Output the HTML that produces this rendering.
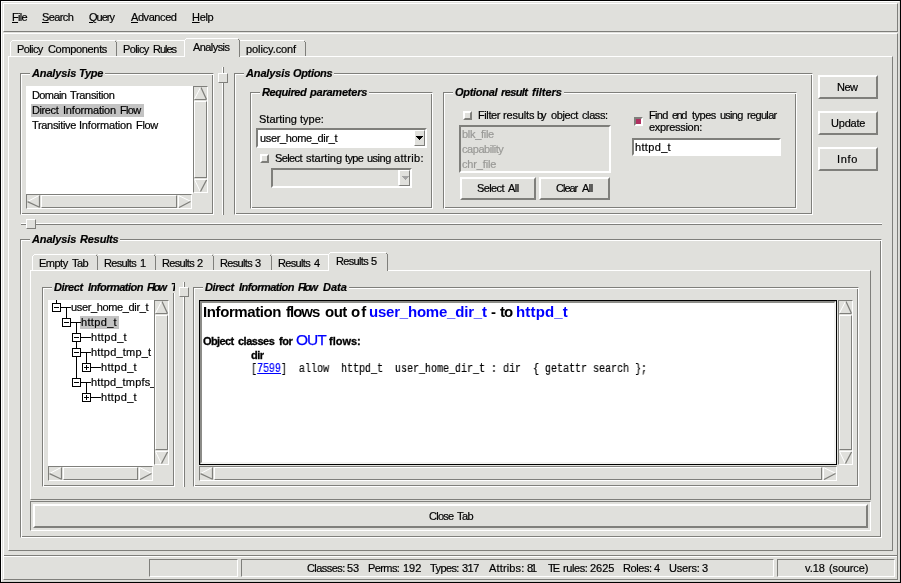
<!DOCTYPE html>
<html>
<head>
<meta charset="utf-8">
<style>
html,body{margin:0;padding:0;}
body{width:901px;height:583px;background:#000;overflow:hidden;position:relative;font-family:"Liberation Sans",sans-serif;font-size:11px;color:#000;}
div,span{box-sizing:border-box;}
.a{position:absolute;}
.bg{background:#e0e0dc;}
.t{position:absolute;white-space:pre;line-height:14px;height:14px;will-change:transform;-webkit-text-stroke:0.2px;}
.raised{border:2px solid;border-color:#ffffff #7f7f7b #7f7f7b #ffffff;}
.raised1{border:1px solid;border-color:#ffffff #7f7f7b #7f7f7b #ffffff;}
.sunken{border:2px solid;border-color:#7f7f7b #ffffff #ffffff #7f7f7b;}
.sunken1{border:1px solid;border-color:#7f7f7b #ffffff #ffffff #7f7f7b;}
.groove{border:1px solid #7f7f7b;border-right-color:#ffffff;border-bottom-color:#ffffff;box-shadow:inset 1px 1px 0 #ffffff, inset -1px -1px 0 #7f7f7b;}
.bi{font-weight:bold;font-style:italic;}
.white{background:#fff;}
.gray{color:#999996;}
.mono{font-family:"Liberation Mono",monospace;}
u{text-decoration:underline;}
</style>
</head>
<body>
<div class="a raised1 bg" style="left:1px;top:1px;width:899px;height:581px;border-right-color:#d4d4d0;border-bottom-color:#d4d4d0;"></div>
<div class="a raised1" style="left:3px;top:3px;width:895px;height:29px;"></div>
<div class="t " style="left:12px;top:10px;letter-spacing:-0.667px;"><u>F</u>ile</div>
<div class="t " style="left:42px;top:10px;letter-spacing:-0.600px;"><u>S</u>earch</div>
<div class="t " style="left:89px;top:10px;letter-spacing:-1.000px;"><u>Q</u>uery</div>
<div class="t " style="left:131px;top:10px;letter-spacing:-0.429px;"><u>A</u>dvanced</div>
<div class="t " style="left:192px;top:10px;letter-spacing:-0.333px;"><u>H</u>elp</div>
<div class="a raised1" style="left:3px;top:33px;width:895px;height:547px;"></div>
<div class="a raised1" style="left:8px;top:56px;width:885px;height:495px;"></div>
<svg class="a" style="left:10px;top:40px;" width="107" height="16" shape-rendering="crispEdges"><polygon points="0,16 0,2 2,0 105,0 107,2 107,16" fill="#e0e0dc"/><path d="M0.5,16 V2.5 L2.5,0.5 H104.5" stroke="#ffffff" fill="none"/><path d="M105.5,1.5 L106.5,2.5 V16" stroke="#7f7f7b" fill="none"/></svg>
<div class="t " style="left:17px;top:42px;letter-spacing:-0.600px;">Policy</div>
<div class="t " style="left:48px;top:42px;letter-spacing:-0.333px;">Components</div>
<svg class="a" style="left:117px;top:40px;" width="71" height="16" shape-rendering="crispEdges"><polygon points="0,16 0,2 2,0 69,0 71,2 71,16" fill="#e0e0dc"/><path d="M0,0.5 H68.5" stroke="#ffffff" fill="none"/><path d="M69.5,1.5 L70.5,2.5 V16" stroke="#7f7f7b" fill="none"/></svg>
<div class="t " style="left:123px;top:42px;letter-spacing:-0.600px;">Policy</div>
<div class="t " style="left:153px;top:42px;letter-spacing:-1.000px;">Rules</div>
<svg class="a" style="left:240px;top:40px;" width="66" height="16" shape-rendering="crispEdges"><polygon points="0,16 0,2 2,0 64,0 66,2 66,16" fill="#e0e0dc"/><path d="M0,0.5 H63.5" stroke="#ffffff" fill="none"/><path d="M64.5,1.5 L65.5,2.5 V16" stroke="#7f7f7b" fill="none"/></svg>
<div class="t " style="left:246px;top:42px;letter-spacing:-0.100px;">policy.conf</div>
<svg class="a" style="left:184px;top:38px;" width="56" height="19" shape-rendering="crispEdges"><polygon points="0,19 0,2 2,0 54,0 56,2 56,19" fill="#e0e0dc"/><path d="M0.5,19 V2.5 L2.5,0.5 H53.5" stroke="#ffffff" fill="none"/><path d="M54.5,1.5 L55.5,2.5 V19" stroke="#7f7f7b" fill="none"/></svg>
<div class="t " style="left:193px;top:40px;letter-spacing:-0.571px;">Analysis</div>
<div class="a groove" style="left:20px;top:73px;width:194px;height:142px;"></div>
<div class="a bg" style="left:30px;top:66px;width:75px;height:13px;"></div>
<div class="t bi" style="left:32px;top:66px;letter-spacing:-0.143px;">Analysis</div>
<div class="t bi" style="left:79px;top:66px;letter-spacing:-0.333px;">Type</div>
<div class="a white" style="left:26px;top:86px;width:167px;height:108px;"></div>
<div class="a " style="left:31px;top:104px;width:113px;height:13px;background:#c3c3c3;"></div>
<div class="t " style="left:32px;top:88px;letter-spacing:-0.600px;">Domain</div>
<div class="t " style="left:70px;top:88px;letter-spacing:-0.333px;">Transition</div>
<div class="t " style="left:32px;top:103px;letter-spacing:-0.400px;">Direct</div>
<div class="t " style="left:63px;top:103px;letter-spacing:-0.200px;">Information</div>
<div class="t " style="left:120px;top:103px;letter-spacing:-0.667px;">Flow</div>
<div class="t " style="left:32px;top:118px;letter-spacing:-0.333px;">Transitive</div>
<div class="t " style="left:79px;top:118px;letter-spacing:-0.200px;">Information</div>
<div class="t " style="left:136px;top:118px;letter-spacing:-0.333px;">Flow</div>
<div class="a sunken1" style="left:193px;top:86px;width:15px;height:107px;"></div>
<svg class="a" style="left:194px;top:87px;" width="13" height="13"><polygon points="6.5,0 13,13 0,13" fill="#e0e0dc"/><path d="M6.5,0.5 L0.5,12" stroke="#ffffff" fill="none"/><path d="M7,0.5 L12.5,12.5 M0.5,12.5 H12.5" stroke="#7f7f7b" stroke-width="1.25" fill="none"/></svg>
<div class="a raised1" style="left:194px;top:101px;width:13px;height:77px;"></div>
<svg class="a" style="left:194px;top:179px;" width="13" height="13"><polygon points="0,0 13,0 6.5,13" fill="#e0e0dc"/><path d="M12.5,0.5 H0.5 L6,12" stroke="#ffffff" fill="none"/><path d="M12.5,1 L6.5,12.5" stroke="#7f7f7b" stroke-width="1.25" fill="none"/></svg>
<div class="a sunken1" style="left:26px;top:194px;width:166px;height:15px;"></div>
<svg class="a" style="left:27px;top:195px;" width="13" height="13"><polygon points="0,6.5 13,0 13,13" fill="#e0e0dc"/><path d="M0.5,6.5 L12,0.5" stroke="#ffffff" fill="none"/><path d="M12.5,0.5 V12.5 M12.5,12.2 L0.5,6.6" stroke="#7f7f7b" stroke-width="1.25" fill="none"/></svg>
<div class="a raised1" style="left:41px;top:195px;width:136px;height:13px;"></div>
<svg class="a" style="left:178px;top:195px;" width="13" height="13"><polygon points="0,0 13,6.5 0,13" fill="#e0e0dc"/><path d="M0.5,12.5 V0.5 L12,6" stroke="#ffffff" fill="none"/><path d="M12.5,6.5 L1,12.5" stroke="#7f7f7b" stroke-width="1.25" fill="none"/></svg>
<div class="a " style="left:222px;top:67px;width:2px;height:148px;border-left:1px solid #ffffff;border-right:1px solid #7f7f7b;"></div>
<div class="a raised1 bg" style="left:218px;top:73px;width:10px;height:10px;"></div>
<div class="a groove" style="left:234px;top:73px;width:579px;height:142px;"></div>
<div class="a bg" style="left:244px;top:66px;width:90px;height:13px;"></div>
<div class="t bi" style="left:246px;top:66px;letter-spacing:-0.143px;">Analysis</div>
<div class="t bi" style="left:293px;top:66px;letter-spacing:-0.333px;">Options</div>
<div class="a groove" style="left:250px;top:92px;width:183px;height:117px;"></div>
<div class="a bg" style="left:260px;top:85px;width:109px;height:13px;"></div>
<div class="t bi" style="left:262px;top:85px;letter-spacing:-0.429px;">Required</div>
<div class="t bi" style="left:310px;top:85px;letter-spacing:-0.222px;">parameters</div>
<div class="t " style="left:259px;top:112px;letter-spacing:0.000px;">Starting</div>
<div class="t " style="left:300px;top:112px;letter-spacing:0.000px;">type:</div>
<div class="a sunken white" style="left:256px;top:128px;width:171px;height:20px;"></div>
<div class="t " style="left:260px;top:131px;letter-spacing:-0.357px;">user_home_dir_t</div>
<div class="a raised1 bg" style="left:414px;top:130px;width:11px;height:16px;"></div>
<svg class="a" style="left:416px;top:136px" width="7" height="4" shape-rendering="crispEdges"><path d="M0,0.5H7M1,1.5H6M2,2.5H5M3,3.5H4" stroke="#000"/></svg>
<div class="a raised" style="left:260px;top:154px;width:9px;height:9px;"></div>
<div class="t " style="left:275px;top:151px;letter-spacing:-0.600px;">Select</div>
<div class="t " style="left:306px;top:151px;letter-spacing:0.000px;">starting</div>
<div class="t " style="left:345px;top:151px;letter-spacing:-0.667px;">type</div>
<div class="t " style="left:367px;top:151px;letter-spacing:-0.500px;">using</div>
<div class="t " style="left:394px;top:151px;letter-spacing:0.333px;">attrib:</div>
<div class="a sunken" style="left:271px;top:168px;width:141px;height:20px;"></div>
<div class="a raised1 bg" style="left:398px;top:170px;width:12px;height:16px;border-left-width:2px;"></div>
<svg class="a" style="left:402px;top:176px" width="7" height="4" shape-rendering="crispEdges"><path d="M0,0.5H7M1,1.5H6M2,2.5H5M3,3.5H4" stroke="#a3a3a3"/></svg>
<div class="a groove" style="left:443px;top:92px;width:354px;height:117px;"></div>
<div class="a bg" style="left:453px;top:85px;width:111px;height:13px;"></div>
<div class="t bi" style="left:455px;top:85px;letter-spacing:-0.286px;">Optional</div>
<div class="t bi" style="left:501px;top:85px;letter-spacing:-0.600px;">result</div>
<div class="t bi" style="left:532px;top:85px;letter-spacing:0.000px;">filters</div>
<div class="a raised" style="left:463px;top:111px;width:9px;height:9px;"></div>
<div class="t " style="left:478px;top:108px;letter-spacing:-0.400px;">Filter</div>
<div class="t " style="left:503px;top:108px;letter-spacing:-0.167px;">results</div>
<div class="t " style="left:537px;top:108px;letter-spacing:-2.000px;">by</div>
<div class="t " style="left:551px;top:108px;letter-spacing:-0.400px;">object</div>
<div class="t " style="left:582px;top:108px;letter-spacing:-0.400px;">class:</div>
<div class="a sunken" style="left:459px;top:125px;width:152px;height:48px;"></div>
<div class="t gray" style="left:462px;top:127px;letter-spacing:-0.286px;">blk_file</div>
<div class="t gray" style="left:462px;top:142px;letter-spacing:-0.444px;">capability</div>
<div class="t gray" style="left:462px;top:157px;letter-spacing:-0.143px;">chr_file</div>
<div class="a raised" style="left:460px;top:177px;width:76px;height:23px;"></div>
<div class="t " style="left:477px;top:181px;letter-spacing:-0.600px;">Select</div>
<div class="t " style="left:508px;top:181px;letter-spacing:-0.500px;">All</div>
<div class="a raised" style="left:539px;top:177px;width:71px;height:23px;"></div>
<div class="t " style="left:556px;top:181px;letter-spacing:-1.000px;">Clear</div>
<div class="t " style="left:582px;top:181px;letter-spacing:-0.500px;">All</div>
<div class="a sunken" style="left:634px;top:117px;width:9px;height:9px;background:#b03060;"></div>
<div class="t " style="left:649px;top:108px;letter-spacing:-0.667px;">Find</div>
<div class="t " style="left:672px;top:108px;letter-spacing:-1.500px;">end</div>
<div class="t " style="left:692px;top:108px;letter-spacing:-0.500px;">types</div>
<div class="t " style="left:720px;top:108px;letter-spacing:-0.750px;">using</div>
<div class="t " style="left:747px;top:108px;letter-spacing:-0.667px;">regular</div>
<div class="t " style="left:649px;top:120px;letter-spacing:-0.300px;">expression:</div>
<div class="a sunken white" style="left:632px;top:138px;width:149px;height:18px;"></div>
<div class="t " style="left:635px;top:140px;letter-spacing:0.333px;">httpd_t</div>
<div class="a raised" style="left:818px;top:75px;width:60px;height:24px;"></div>
<div class="t " style="left:837px;top:80px;letter-spacing:-0.500px;">New</div>
<div class="a raised" style="left:818px;top:111px;width:60px;height:24px;"></div>
<div class="t " style="left:831px;top:116px;letter-spacing:-0.200px;">Update</div>
<div class="a raised" style="left:818px;top:147px;width:60px;height:24px;"></div>
<div class="t " style="left:837px;top:152px;letter-spacing:0.667px;">Info</div>
<div class="a " style="left:21px;top:223px;width:861px;height:2px;border-top:1px solid #ffffff;border-bottom:1px solid #7f7f7b;"></div>
<div class="a raised1 bg" style="left:26px;top:219px;width:10px;height:10px;"></div>
<div class="a groove" style="left:20px;top:239px;width:862px;height:299px;"></div>
<div class="a bg" style="left:30px;top:232px;width:90px;height:13px;"></div>
<div class="t bi" style="left:32px;top:232px;letter-spacing:-0.143px;">Analysis</div>
<div class="t bi" style="left:80px;top:232px;letter-spacing:-0.167px;">Results</div>
<div class="a raised1" style="left:30px;top:270px;width:841px;height:230px;"></div>
<svg class="a" style="left:32px;top:254px;" width="66" height="16" shape-rendering="crispEdges"><polygon points="0,16 0,2 2,0 64,0 66,2 66,16" fill="#e0e0dc"/><path d="M0.5,16 V2.5 L2.5,0.5 H63.5" stroke="#ffffff" fill="none"/><path d="M64.5,1.5 L65.5,2.5 V16" stroke="#7f7f7b" fill="none"/></svg>
<div class="t " style="left:39px;top:256px;letter-spacing:-0.500px;">Empty</div>
<div class="t " style="left:72px;top:256px;letter-spacing:-0.500px;">Tab</div>
<svg class="a" style="left:98px;top:254px;" width="58" height="16" shape-rendering="crispEdges"><polygon points="0,16 0,2 2,0 56,0 58,2 58,16" fill="#e0e0dc"/><path d="M0,0.5 H55.5" stroke="#ffffff" fill="none"/><path d="M56.5,1.5 L57.5,2.5 V16" stroke="#7f7f7b" fill="none"/></svg>
<div class="t " style="left:104px;top:256px;letter-spacing:-0.667px;">Results</div>
<div class="t " style="left:140px;top:256px;letter-spacing:0.000px;">1</div>
<svg class="a" style="left:156px;top:254px;" width="58" height="16" shape-rendering="crispEdges"><polygon points="0,16 0,2 2,0 56,0 58,2 58,16" fill="#e0e0dc"/><path d="M0,0.5 H55.5" stroke="#ffffff" fill="none"/><path d="M56.5,1.5 L57.5,2.5 V16" stroke="#7f7f7b" fill="none"/></svg>
<div class="t " style="left:162px;top:256px;letter-spacing:-0.667px;">Results</div>
<div class="t " style="left:197px;top:256px;letter-spacing:0.000px;">2</div>
<svg class="a" style="left:214px;top:254px;" width="58" height="16" shape-rendering="crispEdges"><polygon points="0,16 0,2 2,0 56,0 58,2 58,16" fill="#e0e0dc"/><path d="M0,0.5 H55.5" stroke="#ffffff" fill="none"/><path d="M56.5,1.5 L57.5,2.5 V16" stroke="#7f7f7b" fill="none"/></svg>
<div class="t " style="left:220px;top:256px;letter-spacing:-0.667px;">Results</div>
<div class="t " style="left:255px;top:256px;letter-spacing:0.000px;">3</div>
<svg class="a" style="left:272px;top:254px;" width="60" height="16" shape-rendering="crispEdges"><polygon points="0,16 0,2 2,0 58,0 60,2 60,16" fill="#e0e0dc"/><path d="M0,0.5 H57.5" stroke="#ffffff" fill="none"/><path d="M58.5,1.5 L59.5,2.5 V16" stroke="#7f7f7b" fill="none"/></svg>
<div class="t " style="left:278px;top:256px;letter-spacing:-0.667px;">Results</div>
<div class="t " style="left:314px;top:256px;letter-spacing:0.000px;">4</div>
<svg class="a" style="left:328px;top:252px;" width="60" height="19" shape-rendering="crispEdges"><polygon points="0,19 0,2 2,0 58,0 60,2 60,19" fill="#e0e0dc"/><path d="M0.5,19 V2.5 L2.5,0.5 H57.5" stroke="#ffffff" fill="none"/><path d="M58.5,1.5 L59.5,2.5 V19" stroke="#7f7f7b" fill="none"/></svg>
<div class="t " style="left:336px;top:254px;letter-spacing:-0.667px;">Results</div>
<div class="t " style="left:371px;top:254px;letter-spacing:0.000px;">5</div>
<div class="a groove" style="left:42px;top:287px;width:133px;height:200px;"></div>
<div class="a bg" style="left:52px;top:280px;width:123px;height:13px;"></div>
<div class="t bi" style="left:54px;top:280px;letter-spacing:-0.400px;">Direct</div>
<div class="t bi" style="left:88px;top:280px;letter-spacing:-0.500px;">Information</div>
<div class="t bi" style="left:147px;top:280px;letter-spacing:-1.667px;">Flow</div>
<div class="t bi" style="left:171px;top:280px;letter-spacing:0.000px;width:4px;overflow:hidden;">T</div>
<div class="a white" style="left:48px;top:300px;width:106px;height:166px;"></div>
<div class="a sunken1" style="left:154px;top:300px;width:15px;height:165px;"></div>
<svg class="a" style="left:155px;top:301px;" width="13" height="13"><polygon points="6.5,0 13,13 0,13" fill="#e0e0dc"/><path d="M6.5,0.5 L0.5,12" stroke="#ffffff" fill="none"/><path d="M7,0.5 L12.5,12.5 M0.5,12.5 H12.5" stroke="#7f7f7b" stroke-width="1.25" fill="none"/></svg>
<div class="a raised1" style="left:155px;top:315px;width:13px;height:135px;"></div>
<svg class="a" style="left:155px;top:451px;" width="13" height="13"><polygon points="0,0 13,0 6.5,13" fill="#e0e0dc"/><path d="M12.5,0.5 H0.5 L6,12" stroke="#ffffff" fill="none"/><path d="M12.5,1 L6.5,12.5" stroke="#7f7f7b" stroke-width="1.25" fill="none"/></svg>
<div class="a sunken1" style="left:48px;top:466px;width:105px;height:15px;"></div>
<svg class="a" style="left:49px;top:467px;" width="13" height="13"><polygon points="0,6.5 13,0 13,13" fill="#e0e0dc"/><path d="M0.5,6.5 L12,0.5" stroke="#ffffff" fill="none"/><path d="M12.5,0.5 V12.5 M12.5,12.2 L0.5,6.6" stroke="#7f7f7b" stroke-width="1.25" fill="none"/></svg>
<div class="a raised1" style="left:63px;top:467px;width:75px;height:13px;"></div>
<svg class="a" style="left:139px;top:467px;" width="13" height="13"><polygon points="0,0 13,6.5 0,13" fill="#e0e0dc"/><path d="M0.5,12.5 V0.5 L12,6" stroke="#ffffff" fill="none"/><path d="M12.5,6.5 L1,12.5" stroke="#7f7f7b" stroke-width="1.25" fill="none"/></svg>
<div class="a " style="left:183px;top:282px;width:2px;height:205px;border-left:1px solid #ffffff;border-right:1px solid #7f7f7b;"></div>
<div class="a raised1 bg" style="left:179px;top:287px;width:10px;height:10px;"></div>
<div class="a groove" style="left:193px;top:287px;width:666px;height:200px;"></div>
<div class="a bg" style="left:203px;top:280px;width:146px;height:13px;"></div>
<div class="t bi" style="left:205px;top:280px;letter-spacing:-0.400px;">Direct</div>
<div class="t bi" style="left:239px;top:280px;letter-spacing:-0.500px;">Information</div>
<div class="t bi" style="left:298px;top:280px;letter-spacing:-1.667px;">Flow</div>
<div class="t bi" style="left:323px;top:280px;letter-spacing:0.000px;">Data</div>
<div class="a " style="left:199px;top:300px;width:638px;height:165px;background:#000;"></div>
<div class="a white" style="left:200px;top:301px;width:636px;height:163px;border:2px solid;border-color:#8c8c88 #f4f4f2 #f4f4f2 #8c8c88;"></div>
<div class="a sunken1" style="left:838px;top:300px;width:15px;height:165px;"></div>
<svg class="a" style="left:839px;top:301px;" width="13" height="13"><polygon points="6.5,0 13,13 0,13" fill="#e0e0dc"/><path d="M6.5,0.5 L0.5,12" stroke="#ffffff" fill="none"/><path d="M7,0.5 L12.5,12.5 M0.5,12.5 H12.5" stroke="#7f7f7b" stroke-width="1.25" fill="none"/></svg>
<div class="a raised1" style="left:839px;top:315px;width:13px;height:135px;"></div>
<svg class="a" style="left:839px;top:451px;" width="13" height="13"><polygon points="0,0 13,0 6.5,13" fill="#e0e0dc"/><path d="M12.5,0.5 H0.5 L6,12" stroke="#ffffff" fill="none"/><path d="M12.5,1 L6.5,12.5" stroke="#7f7f7b" stroke-width="1.25" fill="none"/></svg>
<div class="a sunken1" style="left:199px;top:466px;width:638px;height:15px;"></div>
<svg class="a" style="left:200px;top:467px;" width="13" height="13"><polygon points="0,6.5 13,0 13,13" fill="#e0e0dc"/><path d="M0.5,6.5 L12,0.5" stroke="#ffffff" fill="none"/><path d="M12.5,0.5 V12.5 M12.5,12.2 L0.5,6.6" stroke="#7f7f7b" stroke-width="1.25" fill="none"/></svg>
<div class="a raised1" style="left:214px;top:467px;width:608px;height:13px;"></div>
<svg class="a" style="left:823px;top:467px;" width="13" height="13"><polygon points="0,0 13,6.5 0,13" fill="#e0e0dc"/><path d="M0.5,12.5 V0.5 L12,6" stroke="#ffffff" fill="none"/><path d="M12.5,6.5 L1,12.5" stroke="#7f7f7b" stroke-width="1.25" fill="none"/></svg>
<div class="a " style="left:56px;top:300px;width:1px;height:3px;background:#000;"></div>
<div class="a " style="left:66px;top:307px;width:1px;height:16px;background:#000;"></div>
<div class="a " style="left:76px;top:322px;width:1px;height:61px;background:#000;"></div>
<div class="a " style="left:86px;top:352px;width:1px;height:16px;background:#000;"></div>
<div class="a " style="left:86px;top:382px;width:1px;height:16px;background:#000;"></div>
<div class="a " style="left:80px;top:316px;width:39px;height:13px;background:#c3c3c3;"></div>
<div class="a " style="left:56px;top:307px;width:15px;height:1px;background:#000;"></div>
<svg class="a" style="left:52px;top:303px" width="9" height="9" shape-rendering="crispEdges"><rect x="0.5" y="0.5" width="8" height="8" fill="#fff" stroke="#000"/><path d="M2,4.5 H7" stroke="#000"/></svg>
<div class="t " style="left:71px;top:300px;letter-spacing:-0.357px;">user_home_dir_t</div>
<div class="a " style="left:66px;top:322px;width:15px;height:1px;background:#000;"></div>
<svg class="a" style="left:62px;top:318px" width="9" height="9" shape-rendering="crispEdges"><rect x="0.5" y="0.5" width="8" height="8" fill="#fff" stroke="#000"/><path d="M2,4.5 H7" stroke="#000"/></svg>
<div class="t " style="left:81px;top:315px;letter-spacing:0.333px;">httpd_t</div>
<div class="a " style="left:76px;top:337px;width:15px;height:1px;background:#000;"></div>
<svg class="a" style="left:72px;top:333px" width="9" height="9" shape-rendering="crispEdges"><rect x="0.5" y="0.5" width="8" height="8" fill="#fff" stroke="#000"/><path d="M2,4.5 H7" stroke="#000"/></svg>
<div class="t " style="left:91px;top:330px;letter-spacing:0.333px;">httpd_t</div>
<div class="a " style="left:76px;top:352px;width:15px;height:1px;background:#000;"></div>
<svg class="a" style="left:72px;top:348px" width="9" height="9" shape-rendering="crispEdges"><rect x="0.5" y="0.5" width="8" height="8" fill="#fff" stroke="#000"/><path d="M2,4.5 H7" stroke="#000"/></svg>
<div class="t " style="left:91px;top:345px;letter-spacing:0.200px;">httpd_tmp_t</div>
<div class="a " style="left:86px;top:367px;width:15px;height:1px;background:#000;"></div>
<svg class="a" style="left:82px;top:363px" width="9" height="9" shape-rendering="crispEdges"><rect x="0.5" y="0.5" width="8" height="8" fill="#fff" stroke="#000"/><path d="M2,4.5 H7" stroke="#000"/><path d="M4.5,2 V7" stroke="#000"/></svg>
<div class="t " style="left:101px;top:360px;letter-spacing:0.333px;">httpd_t</div>
<div class="a " style="left:76px;top:382px;width:15px;height:1px;background:#000;"></div>
<svg class="a" style="left:72px;top:378px" width="9" height="9" shape-rendering="crispEdges"><rect x="0.5" y="0.5" width="8" height="8" fill="#fff" stroke="#000"/><path d="M2,4.5 H7" stroke="#000"/></svg>
<div class="t " style="left:91px;top:375px;letter-spacing:0.167px;width:63px;overflow:hidden;">httpd_tmpfs_t</div>
<div class="a " style="left:86px;top:397px;width:15px;height:1px;background:#000;"></div>
<svg class="a" style="left:82px;top:393px" width="9" height="9" shape-rendering="crispEdges"><rect x="0.5" y="0.5" width="8" height="8" fill="#fff" stroke="#000"/><path d="M2,4.5 H7" stroke="#000"/><path d="M4.5,2 V7" stroke="#000"/></svg>
<div class="t " style="left:101px;top:390px;letter-spacing:0.333px;">httpd_t</div>
<div class="t " style="left:203px;top:305px;letter-spacing:-0.400px;font-size:15px;font-weight:bold;-webkit-text-stroke:0;">Information</div>
<div class="t " style="left:286px;top:305px;letter-spacing:-1.000px;font-size:15px;font-weight:bold;-webkit-text-stroke:0;">flows</div>
<div class="t " style="left:325px;top:305px;letter-spacing:-0.500px;font-size:15px;font-weight:bold;-webkit-text-stroke:0;">out</div>
<div class="t " style="left:351px;top:305px;letter-spacing:1.000px;font-size:15px;font-weight:bold;-webkit-text-stroke:0;">of</div>
<div class="t " style="left:369px;top:305px;letter-spacing:-0.214px;font-size:15px;font-weight:bold;-webkit-text-stroke:0;color:#0000ff;">user_home_dir_t</div>
<div class="t " style="left:491px;top:305px;letter-spacing:0.000px;font-size:15px;font-weight:bold;-webkit-text-stroke:0;">-</div>
<div class="t " style="left:500px;top:305px;letter-spacing:-1.000px;font-size:15px;font-weight:bold;-webkit-text-stroke:0;">to</div>
<div class="t " style="left:516px;top:305px;letter-spacing:0.167px;font-size:15px;font-weight:bold;-webkit-text-stroke:0;color:#0000ff;">httpd_t</div>
<div class="t " style="left:203px;top:334px;letter-spacing:-0.600px;font-weight:bold;-webkit-text-stroke:0.3px;">Object</div>
<div class="t " style="left:238px;top:334px;letter-spacing:-0.500px;font-weight:bold;-webkit-text-stroke:0.3px;">classes</div>
<div class="t " style="left:279px;top:334px;letter-spacing:-0.500px;font-weight:bold;-webkit-text-stroke:0.3px;">for</div>
<div class="t " style="left:296px;top:333px;letter-spacing:-1.000px;font-size:15.5px;-webkit-text-stroke:0.25px;color:#0000ff;">OUT</div>
<div class="t " style="left:329px;top:334px;letter-spacing:0.000px;font-weight:bold;-webkit-text-stroke:0.3px;">flows:</div>
<div class="t " style="left:251px;top:348px;letter-spacing:-0.500px;font-weight:bold;-webkit-text-stroke:0.3px;">dir</div>
<div class="t mono" style="left:251px;top:362px;font-size:12px;transform:scaleX(0.8333);transform-origin:0 0;">[<span style="color:#0000ff;text-decoration:underline;">7599</span>]  allow  httpd_t  user_home_dir_t : dir  { getattr search };</div>
<div class="a sunken1" style="left:30px;top:501px;width:841px;height:30px;"></div>
<div class="a raised" style="left:33px;top:504px;width:835px;height:24px;"></div>
<div class="t " style="left:429px;top:509px;letter-spacing:-0.750px;">Close</div>
<div class="t " style="left:457px;top:509px;letter-spacing:-0.500px;">Tab</div>
<div class="a " style="left:4px;top:555px;width:893px;height:2px;border-top:1px solid #7f7f7b;border-bottom:1px solid #ffffff;"></div>
<div class="a sunken1" style="left:149px;top:559px;width:89px;height:18px;"></div>
<div class="a sunken1" style="left:241px;top:559px;width:533px;height:18px;"></div>
<div class="a sunken1" style="left:777px;top:559px;width:118px;height:18px;"></div>
<div class="t " style="left:307px;top:561px;letter-spacing:-0.571px;">Classes:</div>
<div class="t " style="left:347px;top:561px;letter-spacing:0.000px;">53</div>
<div class="t " style="left:368px;top:561px;letter-spacing:-0.600px;">Perms:</div>
<div class="t " style="left:403px;top:561px;letter-spacing:0.000px;">192</div>
<div class="t " style="left:430px;top:561px;letter-spacing:-0.600px;">Types:</div>
<div class="t " style="left:462px;top:561px;letter-spacing:-0.500px;">317</div>
<div class="t " style="left:489px;top:561px;letter-spacing:0.143px;">Attribs:</div>
<div class="t " style="left:527px;top:561px;letter-spacing:-2.000px;">81</div>
<div class="t " style="left:548px;top:561px;letter-spacing:-2.000px;">TE</div>
<div class="t " style="left:563px;top:561px;letter-spacing:-0.400px;">rules:</div>
<div class="t " style="left:590px;top:561px;letter-spacing:0.000px;">2625</div>
<div class="t " style="left:623px;top:561px;letter-spacing:-0.400px;">Roles:</div>
<div class="t " style="left:654px;top:561px;letter-spacing:0.000px;">4</div>
<div class="t " style="left:669px;top:561px;letter-spacing:-0.200px;">Users:</div>
<div class="t " style="left:702px;top:561px;letter-spacing:0.000px;">3</div>
<div class="t " style="left:805px;top:561px;letter-spacing:0.000px;">v.18</div>
<div class="t " style="left:829px;top:561px;letter-spacing:-0.143px;">(source)</div>
</body>
</html>
